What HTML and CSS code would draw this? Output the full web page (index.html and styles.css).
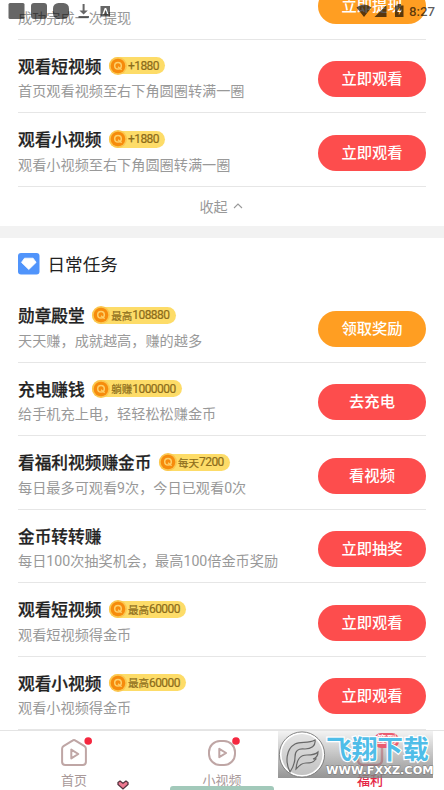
FILE: index.html
```html
<!DOCTYPE html>
<html lang="zh-CN">
<head>
<meta charset="utf-8">
<title>福利</title>
<link rel="stylesheet" href="styles.css">
</head>
<body>
<svg width="0" height="0" class="defs">
  <symbol id="coin" viewBox="0 0 18 18">
    <circle cx="9" cy="9" r="9" fill="#fbc64f"/>
    <circle cx="9" cy="9" r="7.3" fill="#f68b0c"/>
    <circle cx="9" cy="8.8" r="3.3" fill="none" stroke="#fdd06a" stroke-width="1.5"/>
    <path d="M9 9.800l3.600 3" stroke="#fdd06a" stroke-width="1.400"/>
  </symbol>
</svg>
<div class="screen">
  <main class="page">
    <section class="rows first">
      <div class="row"><div class="info"><h3>成功完成次提现<span class="badge"><svg><use href="#coin"/></svg><em>+1880</em></span></h3><p>成功完成一次提现</p></div><a class="btn orange">立即提现</a></div>
      <div class="row"><div class="info"><h3>观看短视频<span class="badge"><svg><use href="#coin"/></svg><em>+1880</em></span></h3><p>首页观看视频至右下角圆圈转满一圈</p></div><a class="btn">立即观看</a></div>
      <div class="row"><div class="info"><h3>观看小视频<span class="badge"><svg><use href="#coin"/></svg><em>+1880</em></span></h3><p>观看小视频至右下角圆圈转满一圈</p></div><a class="btn">立即观看</a></div>
    </section>
    <div class="collapse">收起<svg width="10" height="6" viewBox="0 0 10 6"><path d="M1 5l4-4 4 4" fill="none" stroke="#999" stroke-width="1.1"/></svg></div>
    <div class="gap"></div>
    <h2><svg width="22" height="22" viewBox="0 0 22 22"><rect width="21.500" height="21.500" rx="3" fill="#5094fb"/><path d="M6.500 5.200h8.600l3 4.200-7.300 7.100-7.300-7.100z" fill="#fff" stroke="#fff" stroke-linejoin="round" stroke-width=".8"/></svg>日常任务</h2>
    <section class="rows">
      <div class="row"><div class="info"><h3>勋章殿堂<span class="badge"><svg><use href="#coin"/></svg><small>最高</small><em>108880</em></span></h3><p>天天赚，成就越高，赚的越多</p></div><a class="btn orange">领取奖励</a></div>
      <div class="row"><div class="info"><h3>充电赚钱<span class="badge"><svg><use href="#coin"/></svg><small>躺赚</small><em>1000000</em></span></h3><p>给手机充上电，轻轻松松赚金币</p></div><a class="btn">去充电</a></div>
      <div class="row"><div class="info"><h3>看福利视频赚金币<span class="badge"><svg><use href="#coin"/></svg><small>每天</small><em>7200</em></span></h3><p>每日最多可观看9次，今日已观看0次</p></div><a class="btn">看视频</a></div>
      <div class="row"><div class="info"><h3>金币转转赚</h3><p>每日100次抽奖机会，最高100倍金币奖励</p></div><a class="btn">立即抽奖</a></div>
      <div class="row"><div class="info"><h3>观看短视频<span class="badge"><svg><use href="#coin"/></svg><small>最高</small><em>60000</em></span></h3><p>观看短视频得金币</p></div><a class="btn">立即观看</a></div>
      <div class="row"><div class="info"><h3>观看小视频<span class="badge"><svg><use href="#coin"/></svg><small>最高</small><em>60000</em></span></h3><p>观看小视频得金币</p></div><a class="btn">立即观看</a></div>
    </section>
  </main>

  <header class="status">
    <svg class="left" width="112" height="20" viewBox="0 0 112 20" fill="#000" fill-opacity=".6">
      <rect x="8.500" y="3" width="16" height="16" rx="1.500"/><rect x="31" y="3" width="16" height="16" rx="3"/><rect x="53" y="3" width="16" height="16" rx="5.500"/>
      <path d="M82.600 4h2v6.500h3.200l-4.200 4-4.200-4h3.200zM78.500 16h10.500v1.800h-10.500z"/>
      <path fill-rule="evenodd" d="M100.500 6h9.500v10.500h-9.500zM102.500 14l2.200-6h1.500l2.200 6h-1.400l-1.500-4.300-1.500 4.300z"/>
    </svg>
    <svg width="52" height="20" viewBox="0 0 52 20" fill="#000" fill-opacity=".65">
      <path d="M.5 7.500Q8 1.500 15.500 7.500L8 17zM30.500 5v12h-12zM39 5.500h2.500V4h3.500v1.500h2.500V17H39zM43.800 7.500l-2.800 4.600h1.800v3.200l2.900-4.800h-1.900z" fill-rule="evenodd"/>
    </svg>
    <span>8:27</span>
  </header>

  <nav class="tabs">
    <a><svg width="34" height="34" viewBox="0 0 34 34"><path d="M15.500 4.600q1.500-1 3 0l9 5.600q1.400.9 1.400 2.600v13q0 3.200-3.200 3.200H8.300q-3.200 0-3.200-3.200v-13q0-1.700 1.400-2.600z" fill="none" stroke="#bfa6a5" stroke-width="2"/><path d="M14.300 13.600v8.800l7-4.400z" fill="none" stroke="#bfa6a5" stroke-width="2" stroke-linejoin="round"/><circle cx="31.200" cy="5" r="3.800" fill="#f5273f"/></svg>首页</a>
    <a><svg width="34" height="34" viewBox="0 0 34 34"><rect x="4" y="5" width="26" height="24" rx="11" fill="none" stroke="#bfa6a5" stroke-width="2"/><path d="M14.300 12.800v8.400l6.800-4.200z" fill="none" stroke="#bfa6a5" stroke-width="2" stroke-linejoin="round"/><circle cx="31" cy="5" r="3.800" fill="#f5273f"/></svg>小视频</a>
    <a class="on"><svg width="34" height="34" viewBox="0 0 34 34"><rect x="5" y="4" width="24" height="25" rx="5" fill="none" stroke="#dc4055" stroke-width="2.500"/><path d="M11 18q6 8 12 0" fill="none" stroke="#dc4055" stroke-width="2.500"/></svg><span>福利</span></a>
  </nav>
  <svg class="heart" width="12" height="10" viewBox="0 0 12 10"><path d="M1 2.500L3 1l3 2.300L9 1l2 1.500v2L6 9 1 4.500z" fill="#ee7890" stroke="#54323e" stroke-width="1.300"/></svg>
  <div class="bar"></div>

  <div class="mark">
    <svg class="logo" width="48" height="47" viewBox="0 0 48 47"><circle cx="24" cy="23.500" r="21.500" fill="#ddd" fill-opacity=".6" stroke="#fff" stroke-width="2"/><circle cx="24" cy="23.500" r="22.600" fill="none" stroke="#777" stroke-width=".9"/><path d="M12 41C7 31 8 18 17 13c6-3 13 0 20-4 1 6-4 9-10 9-7-1-10 2-10 8 0 5-1 9-5 15zM18 38c1-10 4-14 11-14 4 0 8 0 11-3 0 4-2 6-5 7h3c-3 4-6 4-10 4-4 0-6 2-10 6z" fill="#d0d0d0" stroke="#686868" stroke-width="1.200"/></svg>
    <span class="pill">签到</span>
    <div class="words"><b>飞翔下载</b><i>WWW.FXXZ.COM</i></div>
  </div>
</div>
</body>
</html>
```
FILE: styles.css
```css
* { box-sizing: border-box; }
body, h2, h3, p { margin: 0; }
body { font-family: Roboto, "Noto Sans CJK SC", sans-serif; background: #fff; }
.defs { position: absolute; }
.screen { position: relative; width: 444px; height: 790px; overflow: hidden; }
.page { height: 790px; overflow: hidden; }
.rows { padding: 0 18px; }
.rows.first { margin-top: -34px; }
.row { height: 73.5px; display: flex; justify-content: space-between; border-bottom: 1px solid #e6e6e6; }
.info { padding-top: 13.8px; white-space: nowrap; }
h3 { display: flex; align-items: center; height: 25px; font-size: 16.7px; font-weight: 500; color: #222; -webkit-text-stroke: .25px #222; }
.first .row:first-child h3 { height: 22px; margin-bottom: 3px; }
p { height: 25px; line-height: 27px; font-size: 14.17px; color: #999; }
.badge { display: inline-flex; align-items: center; height: 17px; margin: 0 0 0 7.5px; padding-right: 6.5px; border-radius: 9px; background: #fddc68; color: #8c6c1b; font-size: 12px; font-weight: 400; -webkit-text-stroke: .2px #8c6c1b; }
.badge svg { width: 18px; height: 18px; margin-right: 1px; flex: none; }
.badge small { font-size: 10.5px; }
.badge em { font-style: normal; letter-spacing: -.55px; }
.btn { width: 108px; height: 36px; margin-top: 21.8px; border-radius: 18px; background: #fd4d4d; color: #fff; text-align: center; line-height: 36.5px; font-size: 15.3px; font-weight: 500; }
.btn.orange { background: #ff9e22; }
.collapse { height: 39.5px; display: flex; align-items: center; justify-content: center; gap: 5px; padding-right: 2px; font-size: 14.1px; color: #999; }
.gap { height: 12px; background: #f2f2f2; }
h2 { height: 51px; display: flex; align-items: center; gap: 7.5px; padding-left: 18px; font-size: 17.6px; font-weight: 400; color: #222; }
.status { position: absolute; top: 0; left: 0; width: 444px; height: 22px; display: flex; padding-right: 8px; color: rgba(0,0,0,.65); font-size: 13.3px; font-weight: 500; line-height: 24px; }
.status .left { margin-right: auto; }
.status span { width: 27px; margin-left: 1px; white-space: nowrap; }
.tabs { position: absolute; left: 0; bottom: 0; width: 444px; height: 60px; display: flex; background: #fff; border-top: 1px solid #e4e4e4; }
.tabs a { flex: 1; display: flex; flex-direction: column; align-items: center; padding-top: 5px; color: #a89999; font-size: 13px; line-height: 21px; }
.tabs .on { color: #e52545; font-weight: 500; }
.tabs svg { flex: none; overflow: visible; }
.heart { position: absolute; left: 117px; top: 780px; }
.bar { position: absolute; left: 170px; top: 786px; width: 104px; height: 5px; border-radius: 3px 3px 0 0; background: #a2c9ba; }
.mark { position: absolute; left: 278px; top: 731px; width: 155px; height: 47px; display: flex; background: linear-gradient(rgba(235,235,235,.6), rgba(125,125,125,.82)); }
.logo { flex: none; }
.words { position: relative; display: flex; flex-direction: column; white-space: nowrap; }
.words b { height: 34px; line-height: 34px; font-size: 25.7px; font-weight: 700; font-family: "Noto Sans CJK SC", sans-serif; color: #4fbde8; -webkit-text-stroke: 2.4px #fff; paint-order: stroke fill; }
.words i { font: bold 11.3px/12px "DejaVu Sans", sans-serif; color: #fff; -webkit-text-stroke: 1px #777; paint-order: stroke fill; }
.pill { position: absolute; left: 96px; top: 2px; width: 25px; height: 15px; border-radius: 7px; background: #e95c70; color: #fff; font-size: 10px; line-height: 14px; text-align: center; }
```
